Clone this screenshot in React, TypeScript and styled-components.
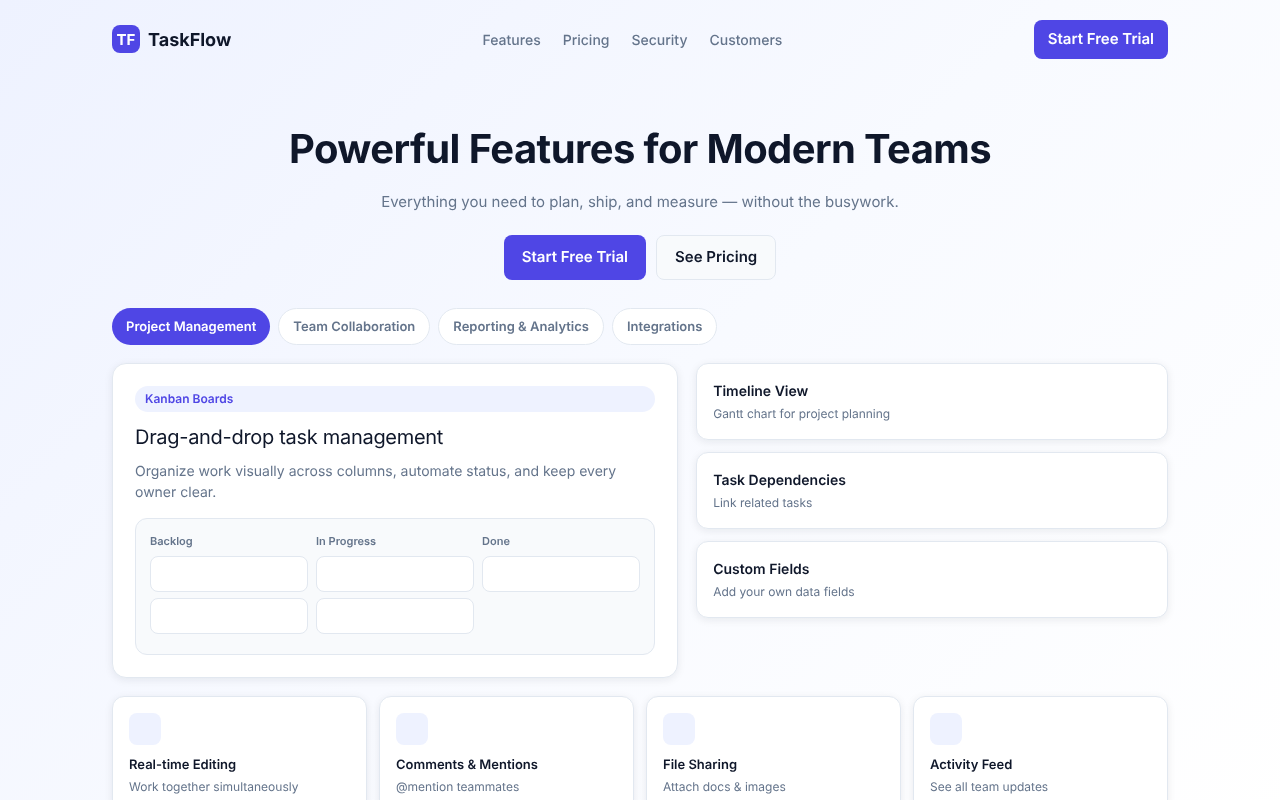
import React from 'react'
import styled, { createGlobalStyle } from 'styled-components'

const tabs = ['Project Management', 'Team Collaboration', 'Reporting & Analytics', 'Integrations']

const sideCards = [
  { title: 'Timeline View', text: 'Gantt chart for project planning' },
  { title: 'Task Dependencies', text: 'Link related tasks' },
  { title: 'Custom Fields', text: 'Add your own data fields' },
]

const miniCards = [
  { title: 'Real-time Editing', text: 'Work together simultaneously' },
  { title: 'Comments & Mentions', text: '@mention teammates' },
  { title: 'File Sharing', text: 'Attach docs & images' },
  { title: 'Activity Feed', text: 'See all team updates' },
]

const columns = [
  { name: 'Backlog', count: 2 },
  { name: 'In Progress', count: 2 },
  { name: 'Done', count: 1 },
]

const App = () => {
  return (
    <Page>
      <GlobalStyle />
      <Wrapper>
        <Nav>
          <Brand>
            <LogoMark>TF</LogoMark>
            <BrandName>TaskFlow</BrandName>
          </Brand>
          <NavLinks>
            <NavLink>Features</NavLink>
            <NavLink>Pricing</NavLink>
            <NavLink>Security</NavLink>
            <NavLink>Customers</NavLink>
          </NavLinks>
          <NavButton>Start Free Trial</NavButton>
        </Nav>

        <Hero>
          <Title>Powerful Features for Modern Teams</Title>
          <Subtitle>Everything you need to plan, ship, and measure — without the busywork.</Subtitle>
          <HeroActions>
            <PrimaryButton>Start Free Trial</PrimaryButton>
            <GhostButton>See Pricing</GhostButton>
          </HeroActions>
        </Hero>

        <TabRow>
          {tabs.map((tab, i) => (
            <Tab key={tab} $active={i === 0}>{tab}</Tab>
          ))}
        </TabRow>

        <MainGrid>
          <FeatureCard>
            <Badge>Kanban Boards</Badge>
            <FeatureTitle>Drag-and-drop task management</FeatureTitle>
            <FeatureText>Organize work visually across columns, automate status, and keep every owner clear.</FeatureText>
            <Board>
              {columns.map((col) => (
                <BoardColumn key={col.name}>
                  <ColumnLabel>{col.name}</ColumnLabel>
                  {Array.from({ length: col.count }).map((_, i) => (
                    <BoardItem key={i} />
                  ))}
                </BoardColumn>
              ))}
            </Board>
          </FeatureCard>

          <SideList>
            {sideCards.map((card) => (
              <SideCard key={card.title}>
                <SideTitle>{card.title}</SideTitle>
                <SideText>{card.text}</SideText>
              </SideCard>
            ))}
          </SideList>
        </MainGrid>

        <MiniGrid>
          {miniCards.map((card) => (
            <MiniCard key={card.title}>
              <MiniIcon />
              <MiniTitle>{card.title}</MiniTitle>
              <MiniText>{card.text}</MiniText>
            </MiniCard>
          ))}
        </MiniGrid>
      </Wrapper>
    </Page>
  )
}

export default App

const GlobalStyle = createGlobalStyle`
  * { box-sizing: border-box; }
  html, body { margin: 0; padding: 0; }
  body {
    font-family: Inter, "Liberation Sans", sans-serif;
    color: #0f172a;
    background: #ffffff;
    text-rendering: geometricPrecision;
  }
  button { text-rendering: geometricPrecision; }
  ::-webkit-scrollbar { display: none; }
`

const Page = styled.div`
  min-height: 800px;
  background: linear-gradient(135deg, #eef2ff 0%, #f8faff 50%, #ffffff 100%);
`

const Wrapper = styled.div`
  width: 1056px;
  margin: 0 auto;
  padding-bottom: 24px;
  will-change: transform;
`

const Nav = styled.nav`
  height: 79px;
  padding-top: 20px;
  display: flex;
  justify-content: space-between;
  align-items: flex-start;
`

const Brand = styled.div`
  display: flex;
  align-items: center;
  gap: 8px;
  height: 38px;
`

const LogoMark = styled.div`
  width: 28px;
  height: 28px;
  border-radius: 8px;
  background: #4f46e5;
  color: #ffffff;
  font-size: 15px;
  font-weight: 700;
  padding-top: 1px;
  display: flex;
  align-items: center;
  justify-content: center;
`

const BrandName = styled.span`
  font-size: 18px;
  font-weight: 700;
  padding-top: 2px;
  color: #0f172a;
`

const NavLinks = styled.div`
  display: flex;
  gap: 22px;
  height: 39px;
  padding-top: 2px;
  align-items: center;
`

const NavLink = styled.a`
  font-size: 14px;
  font-weight: 500;
  color: #64748b;
`

const NavButton = styled.button`
  height: 39px;
  padding: 0 14px 2px;
  border: 0;
  border-radius: 8px;
  background: #4f46e5;
  color: #ffffff;
  font: 600 15px Inter, sans-serif;
`

const Hero = styled.section`
  padding-top: 41px;
  text-align: center;
`

const Title = styled.h1`
  margin: 0;
  font-size: 40px;
  line-height: 58px;
  font-weight: 700;
  letter-spacing: -0.6px;
  color: #0f172a;
`

const Subtitle = styled.p`
  margin: 12px 0 0;
  font-size: 15px;
  line-height: 24px;
  color: #64748b;
`

const HeroActions = styled.div`
  margin-top: 21px;
  display: flex;
  justify-content: center;
  gap: 10px;
`

const PrimaryButton = styled.button`
  height: 45px;
  padding: 0 18px 2px;
  border: 0;
  border-radius: 8px;
  background: #4f46e5;
  color: #ffffff;
  font: 600 15px Inter, sans-serif;
`

const GhostButton = styled.button`
  height: 45px;
  padding: 0 18px 2px;
  border: 1px solid #e2e8f0;
  border-radius: 8px;
  background: #f8fafc;
  color: #0f172a;
  font: 600 15px Inter, sans-serif;
`

const TabRow = styled.div`
  margin-top: 28px;
  display: flex;
  gap: 8px;
`

const Tab = styled.button<{ $active?: boolean }>`
  height: 37px;
  padding: 0 14px;
  border-radius: 999px;
  border: ${(p) => (p.$active ? '0' : '1px solid #e2e8f0')};
  background: ${(p) => (p.$active ? '#4f46e5' : '#ffffff')};
  color: ${(p) => (p.$active ? '#ffffff' : '#64748b')};
  font: 600 13px Inter, sans-serif;
`

const MainGrid = styled.div`
  margin-top: 18px;
  display: grid;
  grid-template-columns: 1.2fr 1fr;
  gap: 18px;
  align-items: start;
`

const FeatureCard = styled.div`
  padding: 22px;
  background: #ffffff;
  border: 1px solid #e2e8f0;
  border-radius: 14px;
  box-shadow: 0 2px 8px rgba(15, 23, 42, 0.08);
`

const Badge = styled.div`
  height: 26px;
  padding: 0 10px;
  border-radius: 999px;
  background: #eef2ff;
  color: #4f46e5;
  font-size: 12px;
  font-weight: 600;
  line-height: 26px;
`

const FeatureTitle = styled.h2`
  margin: 12px 0 0;
  font-size: 20px;
  line-height: 26px;
  font-weight: 400;
  letter-spacing: -0.3px;
  color: #0f172a;
`

const FeatureText = styled.p`
  margin: 11px 0 0;
  font-size: 14px;
  line-height: 21px;
  color: #64748b;
`

const Board = styled.div`
  margin-top: 15px;
  padding: 14px;
  display: grid;
  grid-template-columns: repeat(3, 1fr);
  gap: 8px;
  height: 137px;
  background: #f8fafc;
  border: 1px solid #e2e8f0;
  border-radius: 12px;
`

const BoardColumn = styled.div`
  display: flex;
  flex-direction: column;
  gap: 6px;
`

const ColumnLabel = styled.div`
  font-size: 11px;
  font-weight: 600;
  line-height: 17px;
  color: #64748b;
`

const BoardItem = styled.div`
  height: 36px;
  background: #ffffff;
  border: 1px solid #e2e8f0;
  border-radius: 8px;
`

const SideList = styled.div`
  display: flex;
  flex-direction: column;
  gap: 12px;
`

const SideCard = styled.div`
  height: 77px;
  padding: 17px 16px 16px;
  background: #ffffff;
  border: 1px solid #e2e8f0;
  border-radius: 12px;
  box-shadow: 0 2px 8px rgba(15, 23, 42, 0.08);
`

const SideTitle = styled.h3`
  margin: 0;
  font-size: 14px;
  line-height: 21px;
  font-weight: 600;
  color: #0f172a;
`

const SideText = styled.p`
  margin: 3px 0 0;
  font-size: 12px;
  line-height: 18px;
  color: #64748b;
`

const MiniGrid = styled.div`
  margin-top: 18px;
  display: grid;
  grid-template-columns: repeat(4, 1fr);
  gap: 12px;
`

const MiniCard = styled.div`
  padding: 16px;
  background: #ffffff;
  border: 1px solid #e2e8f0;
  border-radius: 12px;
  box-shadow: 0 2px 8px rgba(15, 23, 42, 0.08);
`

const MiniIcon = styled.div`
  width: 32px;
  height: 32px;
  border-radius: 8px;
  background: #eef2ff;
`

const MiniTitle = styled.h4`
  margin: 10px 0 0;
  font-size: 13px;
  line-height: 20px;
  font-weight: 600;
  color: #0f172a;
`

const MiniText = styled.p`
  margin: 3px 0 0;
  font-size: 12px;
  line-height: 18px;
  color: #64748b;
`
